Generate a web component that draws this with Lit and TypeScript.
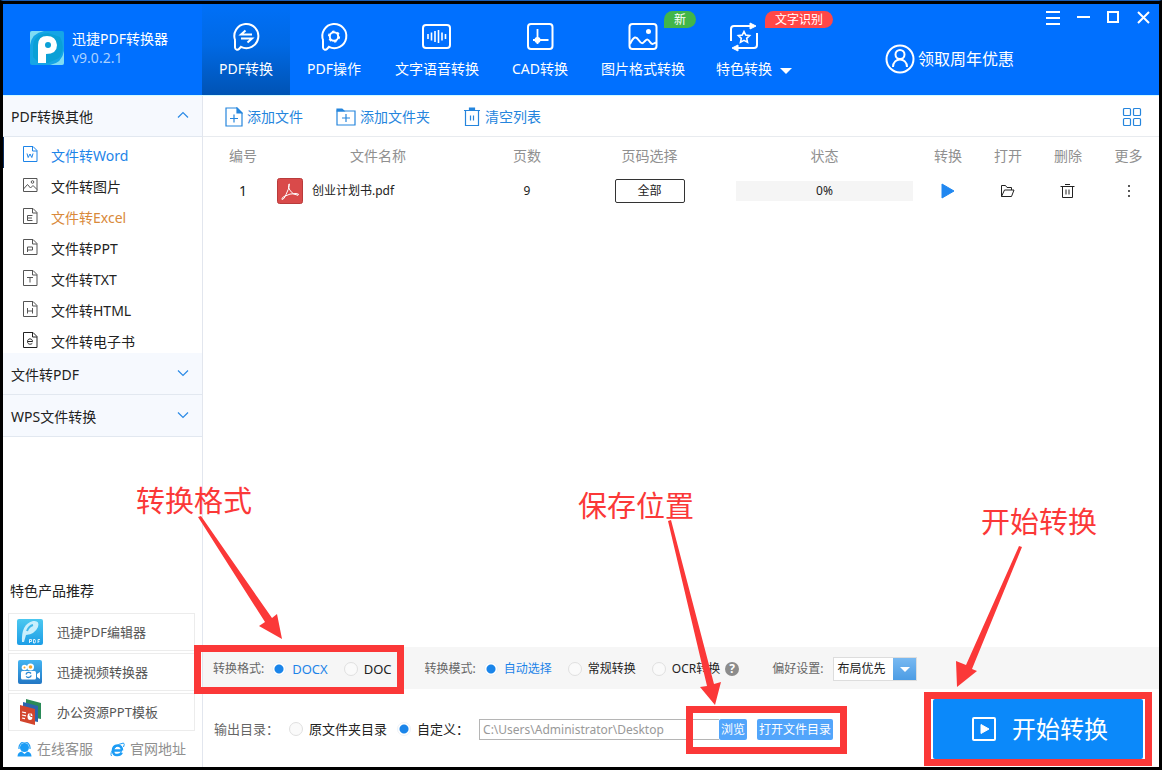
import { LitElement, html, css, svg, nothing } from "lit";
import { customElement, property, state } from "lit/decorators.js";
import { classMap } from "lit/directives/class-map.js";

const FONT = css`"Noto Sans", "Noto Sans CJK SC", sans-serif`;

/* Sheet outline with a folded corner, shared by the sidebar entries. */
const sheet = (letter: unknown) => svg`
  <path d="M.5.5h9.5l4 4v11h-13.5z M9.5.5v4.5h4.5" />${letter}`;

const glyphs: Record<string, unknown> = {
  word: sheet(svg`<path d="M4 7.5l1.2 4L7 8l1.8 3.500L10 7.500" />`),
  picture: svg`<path d="M.5 1.500h13.500v13h-13.500z M.5 12l4-4.500 3 3.500 2.500-2.500 4 4" /><circle cx="9.500" cy="5" r="1.300" />`,
  excel: sheet(svg`<path d="M9.500 7.500h-5v5h5 M4.500 10h4.500" />`),
  ppt: sheet(svg`<path d="M4.500 13v-5h5v3h-5" />`),
  txt: sheet(svg`<path d="M4 7.500h6 M7 7.500v5" />`),
  html: sheet(svg`<path d="M4.500 7v5.500 M9.500 7v5.500 M4.500 10h5" />`),
  ebook: sheet(svg`<path d="M4.500 9.500h5c0-3.500-5-3.500-5 0 0 3.200 3.500 3.200 4.800 1.800" />`),
};

const bubble = svg`<path d="M5.200 19.500a12 12 0 1 1 5.800 6.300l-2 2.200a2.300 2.300 0 0 1-4-1.500v-8" />`;

const tabGlyphs: Record<string, unknown> = {
  convert: svg`${bubble}<path d="M22 13.500h-11l4.500-4 M11 17.500h11l-4.500 4" />`,
  gear: svg`${bubble}<circle cx="16" cy="15.500" r="4.200" /><circle cx="16" cy="15.500" r="5.400" stroke-dasharray="2.600 3.055" stroke-width="1.400" />`,
  voice: svg`<rect x="2" y="4" width="27" height="23" rx="3" /><path d="M7 13v5 M10.500 11.500v8 M14 10v11 M17.500 9v13 M21 11.500v8 M24.500 13v5" stroke-width="1.600" />`,
  cad: svg`<rect x="4" y="3" width="24.500" height="25" rx="3" /><path d="M13.500 8v15 M9 19h15.500" stroke-width="1.800" /><circle cx="13.500" cy="19" r="2" fill="#fff" />`,
  image: svg`<rect x="2.500" y="3" width="27" height="25" rx="3" /><path d="M3 23c4-8 6-8 9-3.500s4 2.500 6 .5 3-2 5 1 3 2 6 .5" /><circle cx="21.500" cy="10.500" r="1.500" fill="#fff" />`,
  star: svg`<path d="M3 20v-12q0-3 3-3h17 M29 12v12q0 3-3 3h-17" /><path d="M22 2l6 3-6 3z M10 24l-6 3 6 3z" fill="#fff" stroke-width="1" /><path d="M16 10.500l1.700 3.600 3.900.5-2.900 2.700.8 3.900-3.500-1.900-3.500 1.900.8-3.900-2.900-2.700 3.900-.5z" stroke-width="1.600" />`,
};

interface Tab { label: string; icon: string; wide?: boolean; badge?: string; tone?: string; menu?: boolean }
const TABS: Tab[] = [
  { label: "PDF转换", icon: "convert" },
  { label: "PDF操作", icon: "gear" },
  { label: "文字语音转换", icon: "voice", wide: true },
  { label: "CAD转换", icon: "cad" },
  { label: "图片格式转换", icon: "image", wide: true, badge: "新", tone: "green" },
  { label: "特色转换", icon: "star", badge: "文字识别", tone: "red", menu: true },
];

@customElement("title-bar")
class TitleBar extends LitElement {
  @state() active = 0;
  static styles = css`
    :host { display: flex; height: 91px; background: #0070ff; color: #fff; position: relative; z-index: 1; box-shadow: 0 1px #d2fbff; font: 14px/20px ${FONT}; }
    button { font: inherit; color: inherit; background: none; border: 0; padding: 0; margin: 0; }
    svg { display: block; fill: none; }
    .brand { flex: 0 0 199px; box-sizing: border-box; padding: 0 0 4px 27px; display: flex; align-items: center; gap: 8px; }
    .name { line-height: 20px; }
    .version { color: #a9d0ff; line-height: 18px; }
    nav { display: flex; }
    .tab { position: relative; box-sizing: border-box; width: 88px; display: flex; flex-direction: column; align-items: center; gap: 6px; padding-top: 17px; }
    .wide { width: 118px; }
    .tab.on { background: linear-gradient(#0070f8, #0069e4 45%, #0053b4); }
    .tab.menu { padding-right: 4px; }
    .tab svg { stroke: #fff; stroke-width: 2; }
    .tab .caret { position: absolute; left: 78px; top: 64px; fill: #fff; stroke: none; }
    .badge { position: absolute; top: 7px; left: 80px; height: 17px; padding: 0 10px; border-radius: 9px 9px 9px 0; font-size: 12px; line-height: 17px; white-space: nowrap; }
    .green { background: #42b649; }
    .red { background: #ff4747; left: 63px; }
    .offer { margin-left: 95px; align-self: center; display: flex; align-items: center; gap: 3px; font-size: 16px; padding-top: 18px; white-space: nowrap; }
    .controls { margin-left: auto; padding: 6px 8px 0 0; display: flex; gap: 14px; align-self: flex-start; }
    .controls svg { stroke: #fff; stroke-width: 2; }
  `;
  render() {
    return html`
      <div class="brand">
        <svg width="34" height="34" viewBox="0 0 34 34">
          <rect width="34" height="34" rx="2" fill="#15a5e6" />
          <path d="M0 14Q2 2 14 0H2Q0 0 0 2z M34 20Q32 32 20 34H32Q34 34 34 32z" fill="#7fdcf3" />
          <path d="M3 26V15Q4 3 18 2L30 6Q36 17 29 27L18 32H9z" fill="#0aa0d6" />
          <path d="M8 32V14Q8 5 17 5T27 14Q27 23 16 23V32z" fill="#fff" />
          <circle cx="18" cy="14" r="3" fill="#0aa0d6" />
        </svg>
        <div><div class="name">迅捷PDF转换器</div><div class="version">v9.0.2.1</div></div>
      </div>
      <nav>
        ${TABS.map((t, i) => html`
          <button class=${classMap({ tab: true, wide: !!t.wide, menu: !!t.menu, on: i === this.active })} @click=${() => (this.active = i)}>
            <svg width="32" height="32" viewBox="0 0 32 32">${tabGlyphs[t.icon]}</svg>
            <span>${t.label}</span>
            ${t.menu ? html`<svg class="caret" width="12" height="6"><path d="M0 0h12l-6 6z" /></svg>` : nothing}
            ${t.badge ? html`<span class="badge ${t.tone}">${t.badge}</span>` : nothing}
          </button>`)}
      </nav>
      <button class="offer">
        <svg width="30" height="30" viewBox="0 0 30 30" stroke="#fff" stroke-width="2">
          <circle cx="15" cy="15" r="13.500" /><circle cx="15" cy="10.500" r="4.500" /><path d="M8 23c0-10 14-10 14 0" />
        </svg>
        <span>领取周年优惠</span>
      </button>
      <div class="controls">
        <button aria-label="菜单"><svg width="16" height="16"><path d="M1 2h14M1 8h14M1 14h14" /></svg></button>
        <button aria-label="最小化"><svg width="16" height="16"><path d="M2 7h13" /></svg></button>
        <button aria-label="最大化"><svg width="16" height="16"><path d="M3 2h10v10h-10z" /></svg></button>
        <button aria-label="关闭"><svg width="16" height="16"><path d="M3 2l11 11M14 2l-11 11" /></svg></button>
      </div>`;
  }
}

const ENTRIES = [
  ["word", "文件转Word"], ["picture", "文件转图片"], ["excel", "文件转Excel"], ["ppt", "文件转PPT"],
  ["txt", "文件转TXT"], ["html", "文件转HTML"], ["ebook", "文件转电子书"],
];

@customElement("side-bar")
class SideBar extends LitElement {
  static styles = css`
    :host { display: flex; flex-direction: column; box-sizing: border-box; border-right: 1px solid #e2e6ee; background: #fff; color: #222; font: 14px/20px ${FONT}; }
    button { font: inherit; color: inherit; border: 0; margin: 0; text-align: left; }
    a { color: inherit; text-decoration: none; }
    svg { display: block; fill: none; flex: none; }
    .group { height: 42px; width: 100%; background: #f6f9fe; border-bottom: 1px solid #e2e8f0; padding: 2px 13px 0 8px; display: flex; align-items: center; justify-content: space-between; }
    .group svg { stroke: #2a8ae6; stroke-width: 1.2; margin-bottom: 4px; }
    ul { list-style: none; margin: 0 0 -1px; padding: 0; }
    .entry { box-sizing: border-box; height: 31px; padding: 7px 0 0 20px; display: flex; align-items: center; gap: 13px; }
    .entry svg { stroke: #555; margin-bottom: 4px; }
    .word { color: #1d84e8; box-shadow: inset 1px 0 #0c2f62; }
    .word svg { stroke: #1d84e8; }
    .excel { color: #d9893a; }
    .ebook svg { stroke: #222; }
    .picks { margin-top: auto; padding: 0 7px 8px 5px; }
    h2 { font: inherit; margin: 0 0 12px 2px; }
    .card { box-sizing: border-box; height: 38px; border: 1px solid #ececec; margin-bottom: 2px; padding-left: 7px; display: flex; align-items: center; gap: 13px; font-size: 13px; color: #555; }
    .card svg { width: 28px; height: 28px; }
    .links { display: flex; color: #8f8f8f; padding: 6px 0 0 9px; gap: 17px; }
    .links a { display: flex; align-items: center; gap: 5px; }
  `;
  render() {
    const chevron = (d: string) => html`<svg width="12" height="8"><path d=${d} /></svg>`;
    return html`
      <button class="group">PDF转换其他 ${chevron("M1 6.500l5-5 5 5")}</button>
      <ul>
        ${ENTRIES.map(([k, label]) => html`<li><a class="entry ${k}" href="#${k}"><svg width="15" height="16">${glyphs[k]}</svg>${label}</a></li>`)}
      </ul>
      <button class="group">文件转PDF ${chevron("M1 1.500l5 5 5-5")}</button>
      <button class="group">WPS文件转换 ${chevron("M1 1.500l5 5 5-5")}</button>
      <section class="picks">
        <h2>特色产品推荐</h2>
        <a class="card" href="#editor">
          <svg viewBox="0 0 28 28"><defs><linearGradient id="a" x2="0" y2="1"><stop stop-color="#4cc8f0" /><stop offset="1" stop-color="#1c9de6" /></linearGradient></defs>
            <rect x="1" y="1" width="26" height="26" rx="2" fill="url(#a)" />
            <path d="M6 24Q5 6 17 3q7-1 5 6-3 7-12 8l-2 7z" fill="#c9effc" /><path d="M11 13Q13 8 17 7" stroke="#3fb8ea" stroke-width="2" />
            <path d="M13.500 25v-3.500h2v2h-2M17.500 21.500v3.500h1.500q1-1.700 0-3.500zM22 25v-3.500h2M22 23.300h1.500" stroke="#fff" stroke-width=".8" /></svg>
          迅捷PDF编辑器</a>
        <a class="card" href="#video">
          <svg viewBox="0 0 28 28"><defs><linearGradient id="b" x2="0" y2="1"><stop stop-color="#43b4f2" /><stop offset="1" stop-color="#2277c4" /></linearGradient></defs>
            <rect x="2" y="2" width="24" height="24" rx="2" fill="url(#b)" />
            <circle cx="8.500" cy="9.500" r="2.800" fill="#fff" /><circle cx="14.500" cy="9" r="3.500" fill="#fff" /><circle cx="14.500" cy="9" r="1.800" fill="#f6a72b" /><circle cx="8.500" cy="9.500" r="1" fill="#f6a72b" />
            <rect x="5" y="13" width="15" height="8.500" rx="1.500" fill="#fff" /><path d="M21 16l3-2v7l-3-2z" fill="#fff" />
            <path d="M10 16.500a2.800 2.800 0 0 1 5-1M15.200 17.300a2.800 2.800 0 0 1-5 1" stroke="#2a87d0" stroke-width="1.300" /></svg>
          迅捷视频转换器</a>
        <a class="card" href="#ppt">
          <svg viewBox="0 0 28 28"><path d="M10 1l15 4v16l-15-3z" fill="#2a8a58" /><path d="M7 4l15 4v16l-15-3z" fill="#2b64ad" />
            <path d="M4 7l15 4v16l-15-4z" fill="#d2452d" /><path d="M6 14l4 .8M6 17l4 .8M6 20l3 .6" stroke="#fff" stroke-width="1.200" /><ellipse cx="14" cy="18.500" rx="2.500" ry="3.500" fill="#fff" /><path d="M14 18v-4M14 18l3 1" stroke="#d2452d" /></svg>
          办公资源PPT模板</a>
        <div class="links">
          <a href="#service"><svg width="15" height="15" viewBox="0 0 15 15"><circle cx="7.500" cy="5.500" r="4.500" fill="#1c9cf5" /><path d="M2 7v-1.500a5.500 5.500 0 0 1 11 0v1.500" stroke="#1c9cf5" stroke-width="1.200" /><path d="M.5 14.500q0-4 4-5l3 2.500 3-2.500q4 1 4 5z" fill="#1c9cf5" /></svg>在线客服</a>
          <a href="#site"><svg width="15" height="15" viewBox="0 0 15 15"><path d="M3.500 8.500h8.500M12 8.500q0-5-4.500-5t-4.500 5 4.500 4.500q3 0 4.200-2.500" stroke="#1c9cf5" stroke-width="2.600" /><path d="M1.500 14q-2-3 3-8T13.500 1q1.500 1 0 4" stroke="#1c9cf5" stroke-width="1" /></svg>官网地址</a>
        </div>
      </section>`;
  }
}

@customElement("file-list")
class FileList extends LitElement {
  static styles = css`
    :host { display: block; font: 14px/20px ${FONT}; color: #222; }
    button { font: inherit; color: inherit; background: none; border: 0; padding: 0; margin: 0; }
    svg { display: block; fill: none; }
    .tools { box-sizing: border-box; height: 42px; border-bottom: 1px solid #e8ebef; display: flex; align-items: center; padding: 2px 17px 0 22px; color: #2585dd; gap: 33px; }
    .tools button { display: flex; align-items: center; gap: 4px; }
    .tools .view { margin-left: auto; }
    .tools svg { stroke: #2585dd; stroke-width: 1.2; }
    table { width: 100%; table-layout: fixed; border-collapse: collapse; }
    th { font-weight: 400; color: #909090; height: 38px; padding: 0; }
    td { height: 32px; padding: 0; text-align: center; font-size: 12px; }
    .no { width: 68px; padding-left: 6px; font-size: 14px; }
    .title { padding-left: 6px; }
    .pages { width: 108px; }
    .range { width: 137px; }
    .state { width: 177px; padding: 0 5px 0 18px; }
    .act { width: 60px; }
    .act.last { width: 61px; }
    .act svg { margin: 0 auto; stroke: #222; }
    .file { display: flex; align-items: center; gap: 9px; }
    .all { box-sizing: border-box; width: 70px; height: 24px; border: 1px solid #333; border-radius: 2px; }
    .bar { background: #f5f5f5; height: 20px; }
  `;
  render() {
    return html`
      <div class="tools">
        <button><svg width="18" height="20"><path d="M1 1h11l5 5v13h-16z M5 11.500h8 M9 7.500v8" /><path d="M12 1v5h5z" fill="#2585dd" /></svg>添加文件</button>
        <button><svg width="20" height="20"><path d="M1 4h18v14h-18z M6 11h8 M10 7v8" /><path d="M1 4v-2h5l2 2z" fill="#2585dd" /></svg>添加文件夹</button>
        <button><svg width="18" height="20"><path d="M1 3.500h16 M2.500 3.500v15h13v-15 M7.500 8.500v5 M10.500 8.500v5" /><path d="M6.500 1h5v2h-5z" fill="#2585dd" /></svg>清空列表</button>
        <button class="view" aria-label="视图"><svg width="20" height="20"><rect x="1.500" y="1.500" width="7" height="7" rx="1" /><rect x="11.500" y="1.500" width="7" height="7" rx="1" /><rect x="1.500" y="11.500" width="7" height="7" rx="1" /><rect x="11.500" y="11.500" width="7" height="7" rx="1" /></svg></button>
      </div>
      <table>
        <thead><tr>
          <th class="no">编号</th><th class="title">文件名称</th><th class="pages">页数</th><th class="range">页码选择</th><th class="state">状态</th>
          <th class="act">转换</th><th class="act">打开</th><th class="act">删除</th><th class="act last">更多</th>
        </tr></thead>
        <tbody><tr>
          <td class="no">1</td>
          <td><div class="file">
            <svg width="26" height="26" viewBox="0 0 26 26"><rect x=".5" y=".5" width="25" height="25" rx="2" fill="#d94a4a" stroke="#b93b3b" />
              <path d="M12 6q-1.500 3 1 6.500 3 4.500 8 4.800 2-1.300-2-1.800-6-.3-12 3-3 2-2 3 2 .3 4-5 3-6 3.300-9 0-2.500-.3-1.500z" stroke="#fff" stroke-width="1" /></svg>
            创业计划书.pdf</div></td>
          <td>9</td>
          <td><button class="all">全部</button></td>
          <td class="state"><div class="bar" role="progressbar" aria-valuenow="0">0%</div></td>
          <td class="act"><svg width="16" height="16"><path d="M2 1l12 7-12 7z" fill="#2087f0" style="stroke:#2087f0" /></svg></td>
          <td class="act"><svg width="16" height="16"><path d="M1.500 13.500v-11h4l1.500 2h4.500v2.500 M1.500 13.500l3-6.500h9.500l-2.500 6.500z" /></svg></td>
          <td class="act"><svg width="16" height="16"><path d="M.5 3.500h14 M5 1.500h5 M2.500 3.500v11h10v-11 M6 6.500v5 M9 6.500v5" /></svg></td>
          <td class="act last"><svg width="16" height="16"><path d="M8 2v2M8 7v2M8 12v2" stroke-width="1.500" /></svg></td>
        </tr></tbody>
      </table>`;
  }
}

/* Red call-out: a frame round the slotted controls, a caption above and an arrow between them. */
@customElement("call-out")
class CallOut extends LitElement {
  @property() kind = "format";
  @property() caption = "";
  static styles = css`
    :host { position: relative; display: flex; align-items: center; }
    .frame, .caption, .arrow { position: absolute; pointer-events: none; z-index: 3; }
    .frame { border: 7px solid #fb3838; }
    .caption { color: #fb3838; font: 29px/40px ${FONT}; white-space: nowrap; }
    .arrow { fill: #fb3838; overflow: visible; width: 1px; height: 1px; }
    .format .frame { inset: -14px -12px -15px -19px; }
    .format .caption { left: -77px; bottom: 158px; }
    .format .arrow { left: 69px; top: -20px; }
    .save .frame { inset: -13px -14px -14px -33px; }
    .save .caption { left: -141px; bottom: 214px; }
    .save .arrow { left: -4px; top: -14px; }
    .start .frame { inset: -7px -9px; border-width: 7px; }
    .start .caption { left: 48px; bottom: 217px; }
    .start .arrow { left: 24px; top: -12px; }
  `;
  render() {
    const arrows: Record<string, string> = {
      format: "M0 0L-23-13-17-17-84-122-81-123-10-21-5-25z",
      save: "M0 0L-15-18-8-19-47-184-44-185-1-21 6-23z",
      start: "M0 0L-1-26 9-22 62-141 65-140 15-18 20-16z",
    };
    return html`<slot></slot>
      <div class=${this.kind}>
        <div class="frame"></div>
        <svg class="arrow"><path d=${arrows[this.kind]} /></svg>
        <div class="caption">${this.caption}</div>
      </div>`;
  }
}

@customElement("output-panel")
class OutputPanel extends LitElement {
  static styles = css`
    :host { display: block; font: 12px/20px ${FONT}; color: #222; white-space: nowrap; }
    button, select, input { font: inherit; color: inherit; margin: 0; }
    label { display: flex; align-items: center; gap: 6px; }
    input[type="radio"] { appearance: none; width: 14px; height: 14px; border: 1px solid #e0e0e0; border-radius: 50%; background: #fafafa; }
    input[type="radio"]:checked { border-color: #edf2f7; background: radial-gradient(circle, #1a85ea 4px, #fff 5px); }
    .modes { box-sizing: border-box; height: 42px; background: #f6f6f6; display: flex; align-items: center; gap: 33px; padding: 2px 0 0 10px; }
    .set { display: flex; align-items: center; gap: 8px; }
    .prefer { gap: 10px; }
    .choices { display: flex; align-items: center; gap: 16px; }
    .caption { color: #666; }
    .on { color: #1d84e8; }
    .latin { font-size: 13px; }
    .ocr { display: flex; align-items: center; gap: 5px; }
    .help { width: 14px; height: 14px; border-radius: 50%; background: #8c8c8c; color: #fff; font-weight: 700; line-height: 14px; text-align: center; }
    .pick { position: relative; display: block; }
    .pick select { appearance: none; display: block; width: 84px; height: 24px; padding: 0 0 0 3px; border: 1px solid #ddd; border-radius: 0; background: linear-gradient(#7abaf2, #4a9be4) right / 24px 24px no-repeat border-box, #fff; }
    .pick svg { position: absolute; right: 7px; top: 10px; fill: #fff; pointer-events: none; }
    .target { min-height: 76px; padding: 2px 16px 0 11px; display: flex; align-items: center; gap: 10px; font-size: 13px; }
    .path { display: flex; }
    .path input { box-sizing: border-box; width: 240px; height: 21px; padding: 0 3px; border: 1px solid #b5b5b5; border-right: 0; color: #999; font-size: 12px; }
    .small { height: 21px; padding: 0 2px; border: 0; border-radius: 2px; background: #52a5fb; color: #fff; font-size: 12px; line-height: 21px; }
    .buttons { display: flex; gap: 10px; }
    .go { margin-left: auto; }
    .start { width: 210px; height: 60px; border: 0; border-radius: 2px; background: #0b89fa; color: #fff; font-size: 24px; display: flex; align-items: center; justify-content: center; gap: 16px; padding: 0 0 0 4px; }
  `;
  private radio(group: string, label: unknown, checked = false, cls = "") {
    return html`<label class="${cls} ${checked && group !== "dir" ? "on" : ""}"><input type="radio" name=${group} ?checked=${checked} />${label}</label>`;
  }
  render() {
    return html`
      <div class="modes">
        <call-out kind="format" caption="转换格式">
          <div class="set"><span class="caption">转换格式:</span>
            <div class="choices">${this.radio("fmt", "DOCX", true, "latin")}${this.radio("fmt", "DOC", false, "latin")}</div></div>
        </call-out>
        <div class="set"><span class="caption">转换模式:</span>
          <div class="choices">${this.radio("mode", "自动选择", true)}${this.radio("mode", "常规转换")}
            <div class="ocr">${this.radio("mode", "OCR转换")}<span class="help">?</span></div></div></div>
        <div class="set prefer"><label class="caption" for="prefer">偏好设置:</label>
          <div class="pick"><select id="prefer"><option>布局优先</option></select><svg width="10" height="5"><path d="M0 0h10l-5 5z" /></svg></div></div>
      </div>
      <div class="target">
        <span class="caption">输出目录：</span>
        ${this.radio("dir", "原文件夹目录")}
        ${this.radio("dir", "自定义：", true)}
        <div class="path">
          <input type="text" aria-label="输出目录" .value=${"C:\\Users\\Administrator\\Desktop"} />
          <call-out kind="save" caption="保存位置">
            <div class="buttons"><button class="small">浏览</button><button class="small">打开文件目录</button></div>
          </call-out>
        </div>
        <call-out class="go" kind="start" caption="开始转换">
          <button class="start"><svg width="24" height="24" fill="none" stroke="#fff" stroke-width="2"><rect x="1" y="1" width="22" height="22" rx="1" /><path d="M9 7.500l8 4.500-8 4.500z" fill="#fff" stroke-width="1" /></svg>开始转换</button>
        </call-out>
      </div>`;
  }
}

@customElement("app-root")
class AppRoot extends LitElement {
  static styles = css`
    :host { display: flex; flex-direction: column; box-sizing: border-box; min-height: 100vh; background: #fff; border: 3px solid #000; border-top: 1px solid #1b5fb8; overflow: hidden; }
    .edge { height: 3px; background: #000; }
    .body { flex: 1; display: flex; }
    side-bar { flex: 0 0 200px; }
    main { flex: 1; min-width: 0; display: flex; flex-direction: column; }
    output-panel { margin-top: auto; }
  `;
  render() {
    return html`
      <div class="edge"></div>
      <title-bar></title-bar>
      <div class="body">
        <side-bar></side-bar>
        <main><file-list></file-list><output-panel></output-panel></main>
      </div>`;
  }
}
